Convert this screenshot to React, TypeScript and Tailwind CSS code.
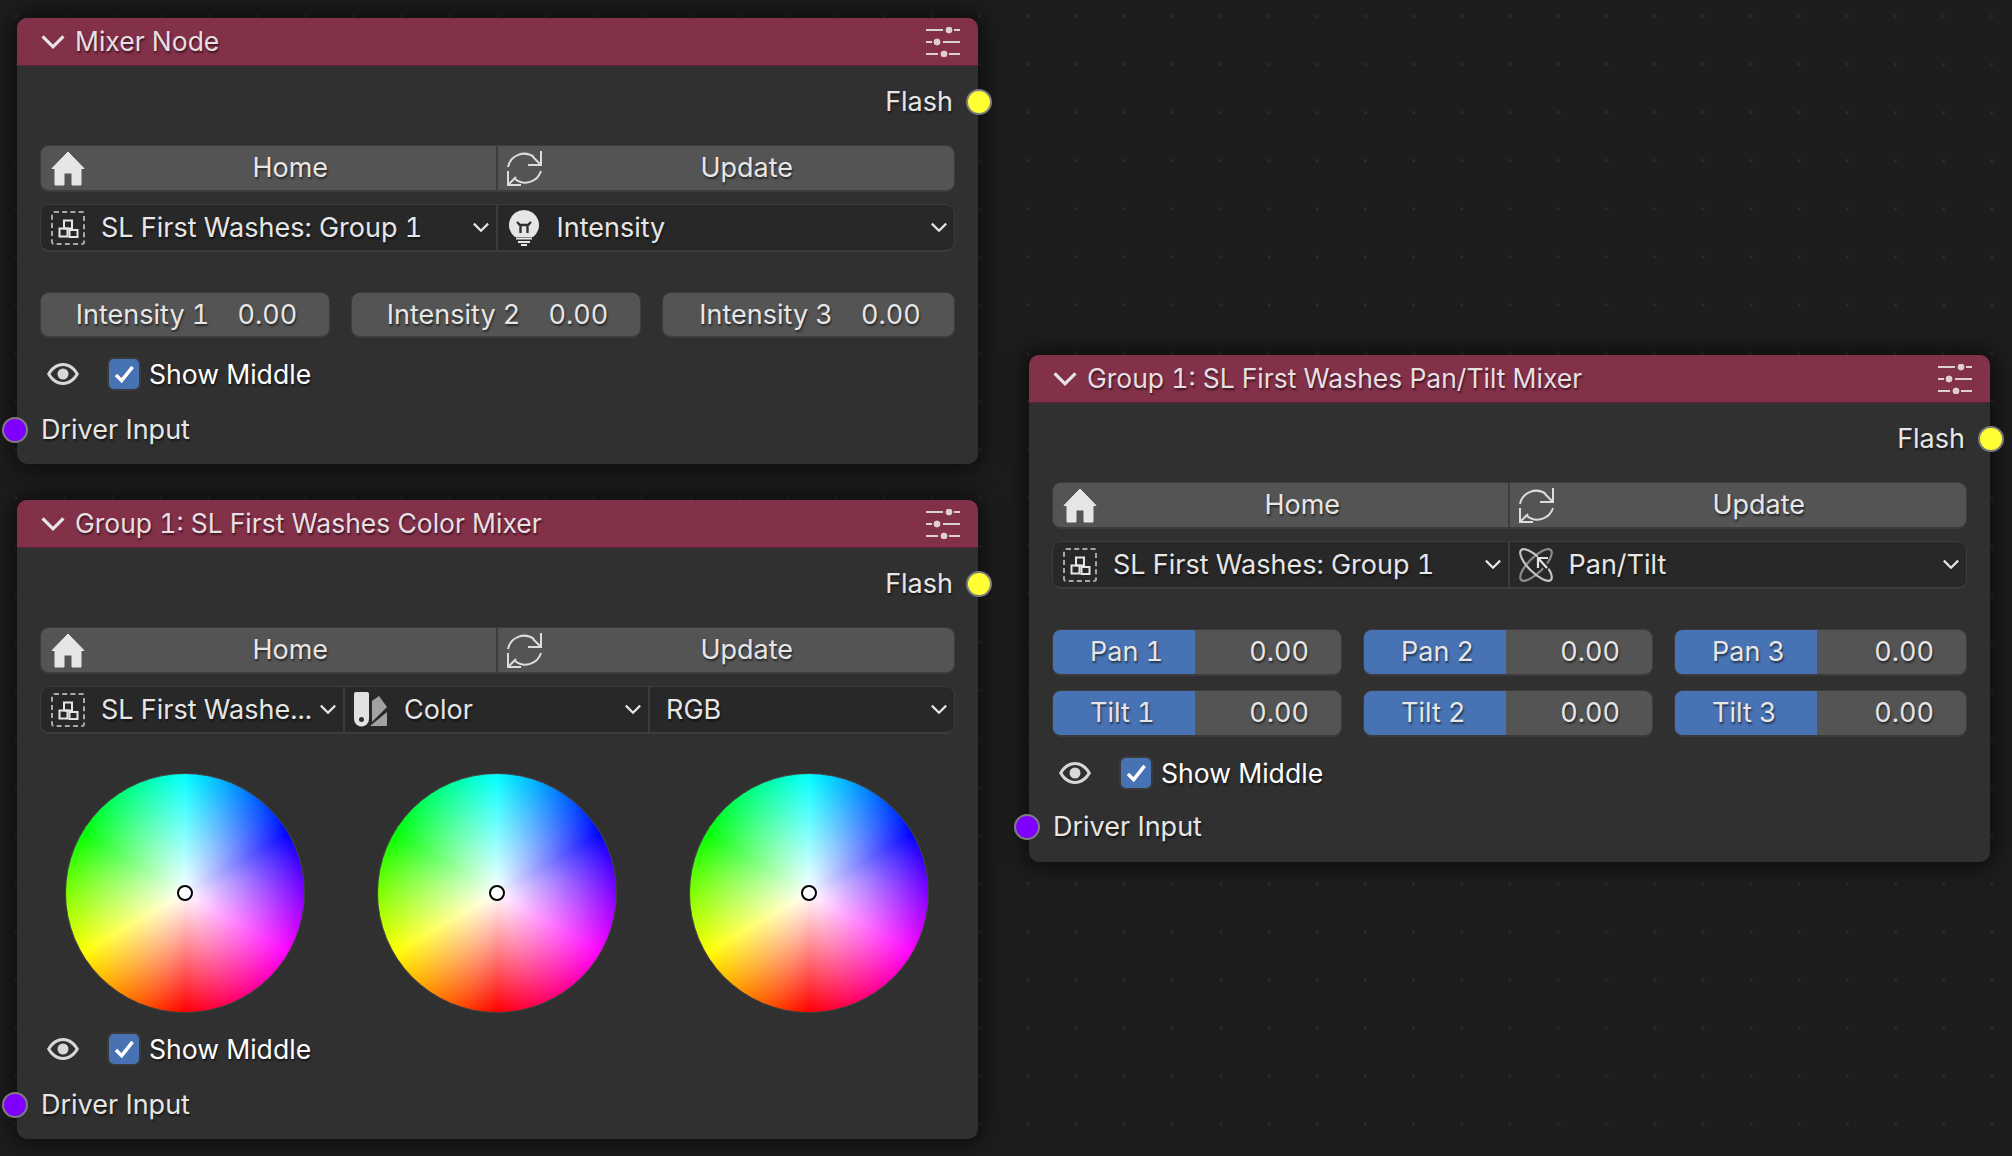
import type { ReactNode } from "react";

const textShadow = "[text-shadow:1px_2px_2px_rgba(0,0,0,0.55)]";

function Chevron({ className = "" }: { className?: string }) {
  return (
    <svg viewBox="0 0 16 10" className={`shrink-0 ${className || "h-[11px] w-[18px]"}`} fill="none" stroke="#e6e6e6" strokeWidth="2">
      <path d="M1.5 1.5 8 8l6.5-6.5" />
    </svg>
  );
}

function HomeIcon() {
  return (
    <svg viewBox="0 0 34 35" className="h-[35px] w-[34px] shrink-0">
      <path
        d="M17 1 33 17.5H30V34H21V22H13V34H4V17.5H1Z"
        fill="#e6e6e6"
        stroke="#e6e6e6"
        strokeLinejoin="round"
        strokeWidth="1"
      />
    </svg>
  );
}

function RefreshIcon() {
  return (
    <svg viewBox="0 0 35 35" className="h-[35px] w-[35px] shrink-0" fill="none" stroke="#dcdcdc" strokeWidth="2">
      <path d="M1 16A16.500 16.500 0 0 1 27 6" />
      <path d="M34 0V14H21M34 14 26 6" />
      <path d="M34 20A16.500 16.500 0 0 1 8 28" />
      <path d="M1 20V34H14M1 34 9 26" />
    </svg>
  );
}

function GroupIcon() {
  return (
    <svg viewBox="0 0 34 34" className="h-[34px] w-[34px] shrink-0" fill="none">
      <rect x="1" y="1" width="32" height="32" rx="2" stroke="#a8a8a8" strokeWidth="2" strokeDasharray="5 3.200" />
      <g stroke="#e6e6e6" strokeWidth="2">
        <rect x="13" y="9.500" width="8" height="8" />
        <rect x="8.500" y="17.500" width="8" height="8" />
        <rect x="18.500" y="19" width="8" height="7" />
      </g>
    </svg>
  );
}

function BulbIcon() {
  return (
    <svg viewBox="0 0 30 36" className="ml-[2px] h-[36px] w-[30px] shrink-0" fill="none">
      <path d="M15 0a15 15 0 0 1 9 27H6A15 15 0 0 1 15 0Z" fill="#e6e6e6" />
      <path d="M8 12l3 3h8l3-3M11.500 15v8M18.500 15v8" stroke="#303030" strokeWidth="2.400" />
      <path d="M7 28.500H23M9 32H21M12 35H18" stroke="#e6e6e6" strokeWidth="2" />
    </svg>
  );
}

function ColorIcon() {
  return (
    <svg viewBox="0 0 34 35" className="h-[35px] w-[34px] shrink-0">
      <path d="M2 0H13a2 2 0 0 1 2 2V27a7.500 7.500 0 0 1-15 0V2a2 2 0 0 1 2-2Z" fill="#e2e2e2" />
      <circle cx="7.500" cy="27.500" r="2.500" fill="#303030" />
      <path d="M18 9 25 4l8 11-15 15Z" fill="#a2a2a2" />
      <path d="M33 20V33a1 1 0 0 1-1 1H16Z" fill="#a2a2a2" />
    </svg>
  );
}

function PanTiltIcon() {
  return (
    <svg viewBox="0 0 34 34" className="h-[34px] w-[34px] shrink-0" fill="none" strokeWidth="2.200">
      <ellipse cx="17" cy="17" rx="21" ry="7.500" transform="rotate(-45 17 17)" stroke="#8c8c8c" />
      <ellipse cx="17" cy="17" rx="21" ry="7.500" transform="rotate(45 17 17)" stroke="#c4c4c4" />
      <path d="M19 10V20M19 10H29M19 10 29 21" stroke="#282828" strokeWidth="6" />
      <path d="M19 10V20M19 10H29M19 10 28 20" stroke="#e6e6e6" />
    </svg>
  );
}

function EyeIcon() {
  return (
    <svg viewBox="0 0 32 22" className="h-[22px] w-[32px] shrink-0">
      <path
        fillRule="evenodd"
        d="M16 0C24 0 29 5.500 32 11 29 16.500 24 22 16 22S3 16.500 0 11C3 5.500 8 0 16 0ZM16 3C10.500 3 6 7 3.500 11 6 15 10.500 19 16 19S26 15 28.500 11C26 7 21.500 3 16 3Z"
        fill="#d8d8d8"
      />
      <circle cx="16" cy="11" r="5.500" fill="#d8d8d8" />
    </svg>
  );
}

function PrefsIcon() {
  return (
    <svg viewBox="0 0 34 30" className="h-[30px] w-[34px] shrink-0" fill="#ddd0d4" stroke="#ddd0d4" strokeWidth="2">
      <path fill="none" d="M0 3H17M28 3H34M0 15H6M17 15H34M0 27H12M23 27H34" />
      <circle cx="23" cy="3" r="3" strokeWidth="1" />
      <circle cx="11" cy="15" r="3" strokeWidth="1" />
      <circle cx="18" cy="27" r="3" strokeWidth="1" />
    </svg>
  );
}

function Socket({ color, side }: { color: string; side: "left" | "right" }) {
  return (
    <span
      className={`absolute top-1/2 h-[26px] w-[26px] -translate-y-1/2 rounded-full border-[2.5px] border-[#7d7d7d] ${
        side === "left" ? "left-[-15px]" : "right-[-14px]"
      } ${color}`}
    />
  );
}

function FlashRow() {
  return (
    <div className="relative mx-[-23px] mt-[19px] flex h-[34px] items-center justify-end pr-[25px]">
      <span className={textShadow}>Flash</span>
      <Socket color="bg-[#ffff33]" side="right" />
    </div>
  );
}

function ButtonRow() {
  return (
    <div className="mt-[26px] flex h-[47px] overflow-hidden rounded-[9px] border border-b-2 border-[#3c3c3c] bg-[#545454]">
      <div className="flex w-[454.500px] items-center pl-[10px]">
        <HomeIcon />
        <span className={`flex-1 pb-[1px] text-center ${textShadow}`}>Home</span>
      </div>
      <div className="flex flex-1 items-center border-l-2 border-[#3c3c3c] pl-[9px]">
        <RefreshIcon />
        <span className={`flex-1 pr-[2px] pb-[1px] text-center ${textShadow}`}>Update</span>
      </div>
    </div>
  );
}

function Select({ icon, label, className = "" }: { icon?: ReactNode; label: string; className?: string }) {
  return (
    <div className={`flex items-center border-[#3c3c3c] pr-[6px] not-first:border-l-2 first:pl-px ${className}`}>
      {icon ? (
        <span className="flex w-[59px] shrink-0 pl-[9px]">{icon}</span>
      ) : (
        <span className="w-[16px] shrink-0" />
      )}
      <span className={`flex-1 whitespace-nowrap ${textShadow}`}>{label}</span>
      <Chevron />
    </div>
  );
}

function SelectRow({ children }: { children: ReactNode }) {
  return (
    <div className="mt-[12px] flex h-[48px] overflow-hidden rounded-[9px] border border-b-2 border-[#3c3c3c] bg-[#282828]">
      {children}
    </div>
  );
}

function PlainSlider({ label }: { label: string }) {
  return (
    <div className="flex h-[46px] items-center justify-center gap-[28px] rounded-[9px] border border-b-2 border-[#3c3c3c] bg-[#545454] pl-[3px]">
      <span className={textShadow}>{label}</span>
      <span className={textShadow}>0.00</span>
    </div>
  );
}

function BlueSlider({ label }: { label: string }) {
  return (
    <div className="flex h-[47px] overflow-hidden rounded-[9px] border border-b-2 border-[#3c3c3c] bg-[#545454]">
      <div className="flex w-[142px] items-center bg-[#4772b3] pl-[37px]">
        <span className={textShadow}>{label}</span>
      </div>
      <div className="flex flex-1 items-center justify-end pr-[32px]">
        <span className={textShadow}>0.00</span>
      </div>
    </div>
  );
}

function ShowMiddle({ className = "" }: { className?: string }) {
  return (
    <div className={`flex h-[34px] items-center ${className}`}>
      <span className="flex w-[67px] pl-[7px]">
        <EyeIcon />
      </span>
      <span className="flex h-[34px] w-[34px] items-center justify-center rounded-[7px] border-2 border-[#3a3a3a] bg-[#4772b3]">
        <svg viewBox="0 0 22 20" className="h-[19px] w-[21px]" fill="none" stroke="#fff" strokeWidth="3.600">
          <path d="M2 10.500 8 16.500 19.500 2" />
        </svg>
      </span>
      <span className={`ml-[8px] text-[26.600px] text-white ${textShadow}`}>Show Middle</span>
    </div>
  );
}

function DriverRow({ className = "" }: { className?: string }) {
  return (
    <div className={`relative mx-[-23px] flex h-[33px] items-center pl-[24px] ${className}`}>
      <Socket color="bg-[#8000ff]" side="left" />
      <span className={textShadow}>Driver Input</span>
    </div>
  );
}

function Wheel() {
  return (
    <div className="relative flex h-[240px] w-[240px] items-center justify-center rounded-full border border-[#444444] bg-[radial-gradient(closest-side,#ffffff,#ffffff00),conic-gradient(#00ffff,#0000ff,#ff00ff,#ff0000,#ffff00,#00ff00,#00ffff)]">
      <span className="h-[16px] w-[16px] rounded-full border-2 border-black bg-white" />
    </div>
  );
}

function Node({ title, className, children }: { title: string; className: string; children: ReactNode }) {
  return (
    <section
      className={`absolute w-[961px] rounded-[10px] bg-[#303030] text-[27px] leading-[32px] text-[#e6e6e6] tabular-nums shadow-[0_0_22px_6px_rgba(0,0,0,0.55)] ${className}`}
    >
      <header className="flex h-[48px] items-center rounded-t-[10px] border-b border-[#5e2235] bg-[#833049] pr-[18px] pl-[23px]">
        <Chevron className="h-[16px] w-[26px]" />
        <h2 className={`ml-[9px] flex-1 pb-[2px] text-[26.500px] font-normal text-[#e8dfe2] ${textShadow}`}>{title}</h2>
        <PrefsIcon />
      </header>
      <div className="px-[23px] pb-[18px]">{children}</div>
    </section>
  );
}

export default function App() {
  return (
    <div className="relative h-[1156px] w-[2012px] overflow-hidden bg-[#1d1d1d] bg-[radial-gradient(circle,#2b2b2b_1.500px,transparent_2px)] bg-[size:48.200px_48.200px] bg-[position:-8px_-8px] font-['Inter',sans-serif]">
      <Node title="Mixer Node" className="top-[18px] left-[17px]">
        <FlashRow />
        <ButtonRow />
        <SelectRow>
          <Select className="w-[454.500px]" icon={<GroupIcon />} label="SL First Washes: Group 1" />
          <Select className="flex-1" icon={<BulbIcon />} label="Intensity" />
        </SelectRow>
        <div className="mt-[40px] grid grid-cols-[290px_290px_1fr] gap-[21px]">
          <PlainSlider label="Intensity 1" />
          <PlainSlider label="Intensity 2" />
          <PlainSlider label="Intensity 3" />
        </div>
        <ShowMiddle className="mt-[19px]" />
        <DriverRow className="mt-[22px]" />
      </Node>

      <Node title="Group 1: SL First Washes Color Mixer" className="top-[500px] left-[17px]">
        <FlashRow />
        <ButtonRow />
        <SelectRow>
          <Select className="w-[302px]" icon={<GroupIcon />} label="SL First Washe..." />
          <Select className="w-[305px]" icon={<ColorIcon />} label="Color" />
          <Select className="flex-1" label="RGB" />
        </SelectRow>
        <div className="mt-[39px] -ml-[1px] mr-[1px] grid grid-cols-3 justify-items-center gap-[21px]">
          <Wheel />
          <Wheel />
          <Wheel />
        </div>
        <ShowMiddle className="mt-[19px]" />
        <DriverRow className="mt-[22px]" />
      </Node>

      <Node title="Group 1: SL First Washes Pan/Tilt Mixer" className="top-[355px] left-[1029px]">
        <FlashRow />
        <ButtonRow />
        <SelectRow>
          <Select className="w-[454.500px]" icon={<GroupIcon />} label="SL First Washes: Group 1" />
          <Select className="flex-1" icon={<PanTiltIcon />} label="Pan/Tilt" />
        </SelectRow>
        <div className="mt-[40px] grid grid-cols-[290px_290px_1fr] gap-x-[21px] gap-y-[14px]">
          <BlueSlider label="Pan 1" />
          <BlueSlider label="Pan 2" />
          <BlueSlider label="Pan 3" />
          <BlueSlider label="Tilt 1" />
          <BlueSlider label="Tilt 2" />
          <BlueSlider label="Tilt 3" />
        </div>
        <ShowMiddle className="mt-[19px]" />
        <DriverRow className="mt-[20px] mb-[1px]" />
      </Node>
    </div>
  );
}
